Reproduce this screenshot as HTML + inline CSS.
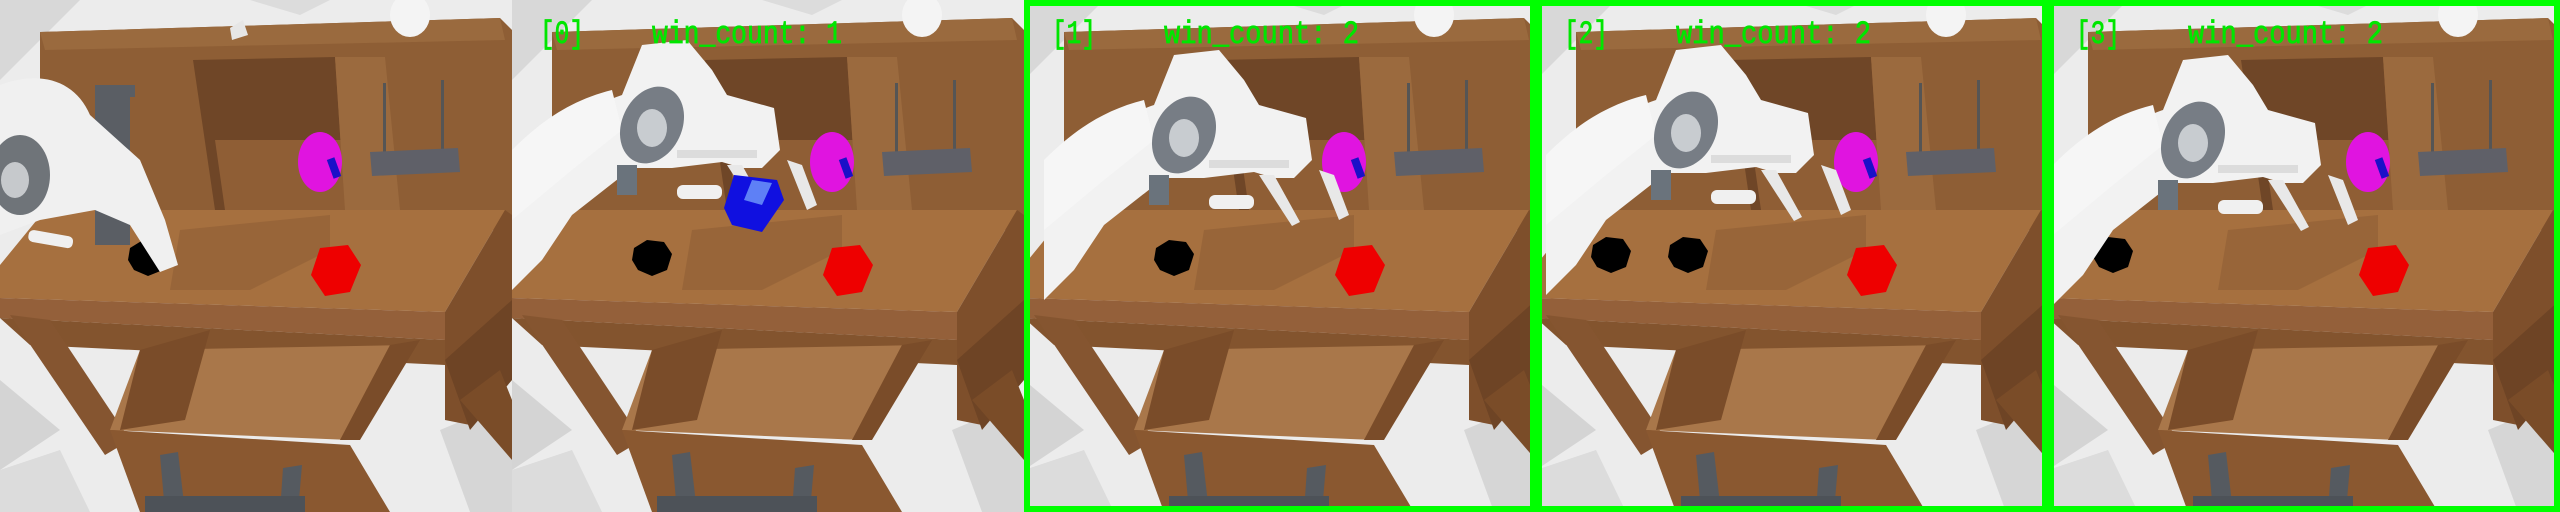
<!DOCTYPE html>
<html><head><meta charset="utf-8"><style>
html,body{margin:0;padding:0;background:#eee;}
svg{display:block;}
</style></head><body>
<svg width="2560" height="512" viewBox="0 0 2560 512" xmlns="http://www.w3.org/2000/svg">
<defs>
<g id="scene">
  <rect x="0" y="0" width="512" height="512" fill="#ececec"/>
  <polygon points="0,0 80,0 0,80" fill="#d8d8d8"/>
  <polygon points="0,380 60,430 0,470" fill="#d4d4d4"/>
  <polygon points="0,470 60,450 90,512 0,512" fill="#dcdcdc"/>
  <polygon points="440,430 512,400 512,512 470,512" fill="#d6d6d6"/>
  <polygon points="250,0 330,0 300,15" fill="#dcdcdc"/>
  <polygon points="40,32 500,18 512,30 512,230 40,230" fill="#8e5e35"/>
  <polygon points="40,32 500,18 505,40 45,50" fill="#9a6a3e"/>
  <polygon points="193,60 335,57 345,210 215,210" fill="#6f4627"/>
  <polygon points="215,140 345,140 345,210 225,210" fill="#8f5e35"/>
  <polygon points="335,57 345,210 400,210 385,57" fill="#9b6a3e"/>
  <rect x="383" y="83" width="3" height="70" fill="#555"/>
  <rect x="441" y="80" width="3" height="73" fill="#555"/>
  <polygon points="370,152 458,148 460,172 372,176" fill="#5f6068"/>
  <polygon points="45,210 505,210 445,312 0,298 0,265" fill="#a6703f"/>
  <polygon points="180,230 330,215 330,250 250,290 170,290" fill="#8f5e36" opacity="0.6"/>
  <polygon points="0,298 445,312 445,340 0,318" fill="#94603a"/>
  <polygon points="0,318 445,340 445,365 30,345" fill="#83542e"/>
  <polygon points="445,312 505,210 512,215 512,370 470,425 445,420" fill="#7e4f2b"/>
  <polygon points="445,360 512,300 512,380 470,430" fill="#6e4425"/>
  <polygon points="460,400 500,370 512,400 512,460" fill="#7a4c28"/>
  <polygon points="10,315 50,320 130,440 105,455" fill="#855530"/>
  <polygon points="140,350 410,345 350,440 110,430" fill="#a9774a"/>
  <polygon points="140,350 210,330 185,420 120,430" fill="#7a4c29"/>
  <polygon points="390,345 420,340 360,440 340,440" fill="#7a4c29"/>
  <polygon points="110,430 350,445 390,512 140,512" fill="#8a5830"/>
  <polygon points="160,455 178,452 185,512 165,512" fill="#555a60"/>
  <polygon points="283,468 302,465 298,512 280,512" fill="#555a60"/>
  <rect x="145" y="496" width="160" height="16" fill="#4d5258"/>
  <ellipse cx="410" cy="15" rx="20" ry="22" fill="#f4f4f4"/>
  <ellipse cx="320" cy="162" rx="22" ry="30" fill="#e014e0"/>
  <rect x="330" y="158" width="8" height="20" fill="#1a10c8" transform="rotate(-20 334 168)"/>
  <polygon points="320,248 348,245 361,265 350,292 325,296 311,275" fill="#ee0000"/>
</g>
<g id="arm">
  <path d="M0,190 C40,130 80,105 110,95 L130,45 L175,40 L200,70 L215,95 L262,108 L268,150 L250,168 L230,168 L210,162 L160,168 L120,168 L60,215 L30,260 L0,290 Z" fill="#f2f2f2"/>
  <path d="M0,150 C30,120 60,100 100,90 L110,130 L60,170 L0,220 Z" fill="#f6f6f6"/>
  <ellipse cx="140" cy="125" rx="30" ry="40" fill="#777d85" transform="rotate(25 140 125)"/>
  <ellipse cx="140" cy="128" rx="15" ry="19" fill="#c8ccd0"/>
  <rect x="165" y="150" width="80" height="8" fill="#dcdcdc"/>
  <rect x="165" y="185" width="45" height="14" rx="6" fill="#f0f0f0"/>
  <path d="M215,165 L230,165 L256,212 L248,216 Z" fill="#e8e8e8"/>
  <path d="M275,160 L290,165 L305,205 L295,210 Z" fill="#e8e8e8"/>
  <rect x="105" y="165" width="20" height="30" fill="#6a737c"/>
</g>
<polygon id="hole" points="-18,-10 -5,-18 12,-16 20,-4 15,12 0,18 -14,12 -20,2" fill="#000"/>
</defs>

<g transform="translate(0,0)">
  <use href="#scene"/>
  <polygon points="230,28 243,20 248,35 232,40" fill="#e6e6e6"/>
  <rect x="95" y="85" width="35" height="160" fill="#5a5e64"/>
  <rect x="95" y="85" width="40" height="12" fill="#5a5e64"/>
  <use href="#hole" transform="translate(148,258)"/>
  <path d="M0,85 C40,70 75,80 90,115 L140,160 L165,220 L178,265 L160,272 L130,225 L95,210 L40,220 L0,235 Z" fill="#f0f0f0"/>
  <ellipse cx="20" cy="175" rx="30" ry="40" fill="#6f7479"/>
  <ellipse cx="15" cy="180" rx="14" ry="18" fill="#c6c9cc"/>
  <rect x="28" y="233" width="45" height="12" rx="5" fill="#f0f0f0" transform="rotate(10 50 240)"/>
</g>
<g transform="translate(512,0)">
  <use href="#scene"/>
  <use href="#hole" transform="translate(140,258)"/>
  <use href="#arm"/>
  <polygon points="222,175 265,180 272,200 250,232 220,225 212,208" fill="#1010e0"/>
  <polygon points="240,180 260,183 250,205 232,200" fill="#80b0ff" opacity="0.7"/>
</g>
<g transform="translate(1024,0)">
  <use href="#scene"/>
  <use href="#hole" transform="translate(150,258)"/>
  <use href="#arm" transform="translate(20,10)"/>
</g>
<g transform="translate(1536,0)">
  <use href="#scene"/>
  <use href="#hole" transform="translate(75,255)"/>
  <use href="#hole" transform="translate(152,255)"/>
  <use href="#arm" transform="translate(10,5)"/>
</g>
<g transform="translate(2048,0)">
  <use href="#scene"/>
  <use href="#hole" transform="translate(65,255)"/>
  <use href="#arm" transform="translate(5,15)"/>
</g>

<g fill="none" stroke="#00ff00" stroke-width="6">
  <rect x="1027" y="3" width="506" height="506"/>
  <rect x="1539" y="3" width="506" height="506"/>
  <rect x="2051" y="3" width="506" height="506"/>
</g>
<g fill="#00e600" stroke="#00e600" stroke-width="0.8" font-family="Liberation Mono, monospace" font-size="32">
  <text x="540" y="43" textLength="44" lengthAdjust="spacingAndGlyphs">[0]</text>
  <text x="652" y="43" textLength="190" lengthAdjust="spacingAndGlyphs">win_count: 1</text>
  <text x="1052" y="43" textLength="44" lengthAdjust="spacingAndGlyphs">[1]</text>
  <text x="1164" y="43" textLength="195" lengthAdjust="spacingAndGlyphs">win_count: 2</text>
  <text x="1564" y="43" textLength="44" lengthAdjust="spacingAndGlyphs">[2]</text>
  <text x="1676" y="43" textLength="195" lengthAdjust="spacingAndGlyphs">win_count: 2</text>
  <text x="2076" y="43" textLength="44" lengthAdjust="spacingAndGlyphs">[3]</text>
  <text x="2188" y="43" textLength="195" lengthAdjust="spacingAndGlyphs">win_count: 2</text>
</g>
</svg>
</body></html>
